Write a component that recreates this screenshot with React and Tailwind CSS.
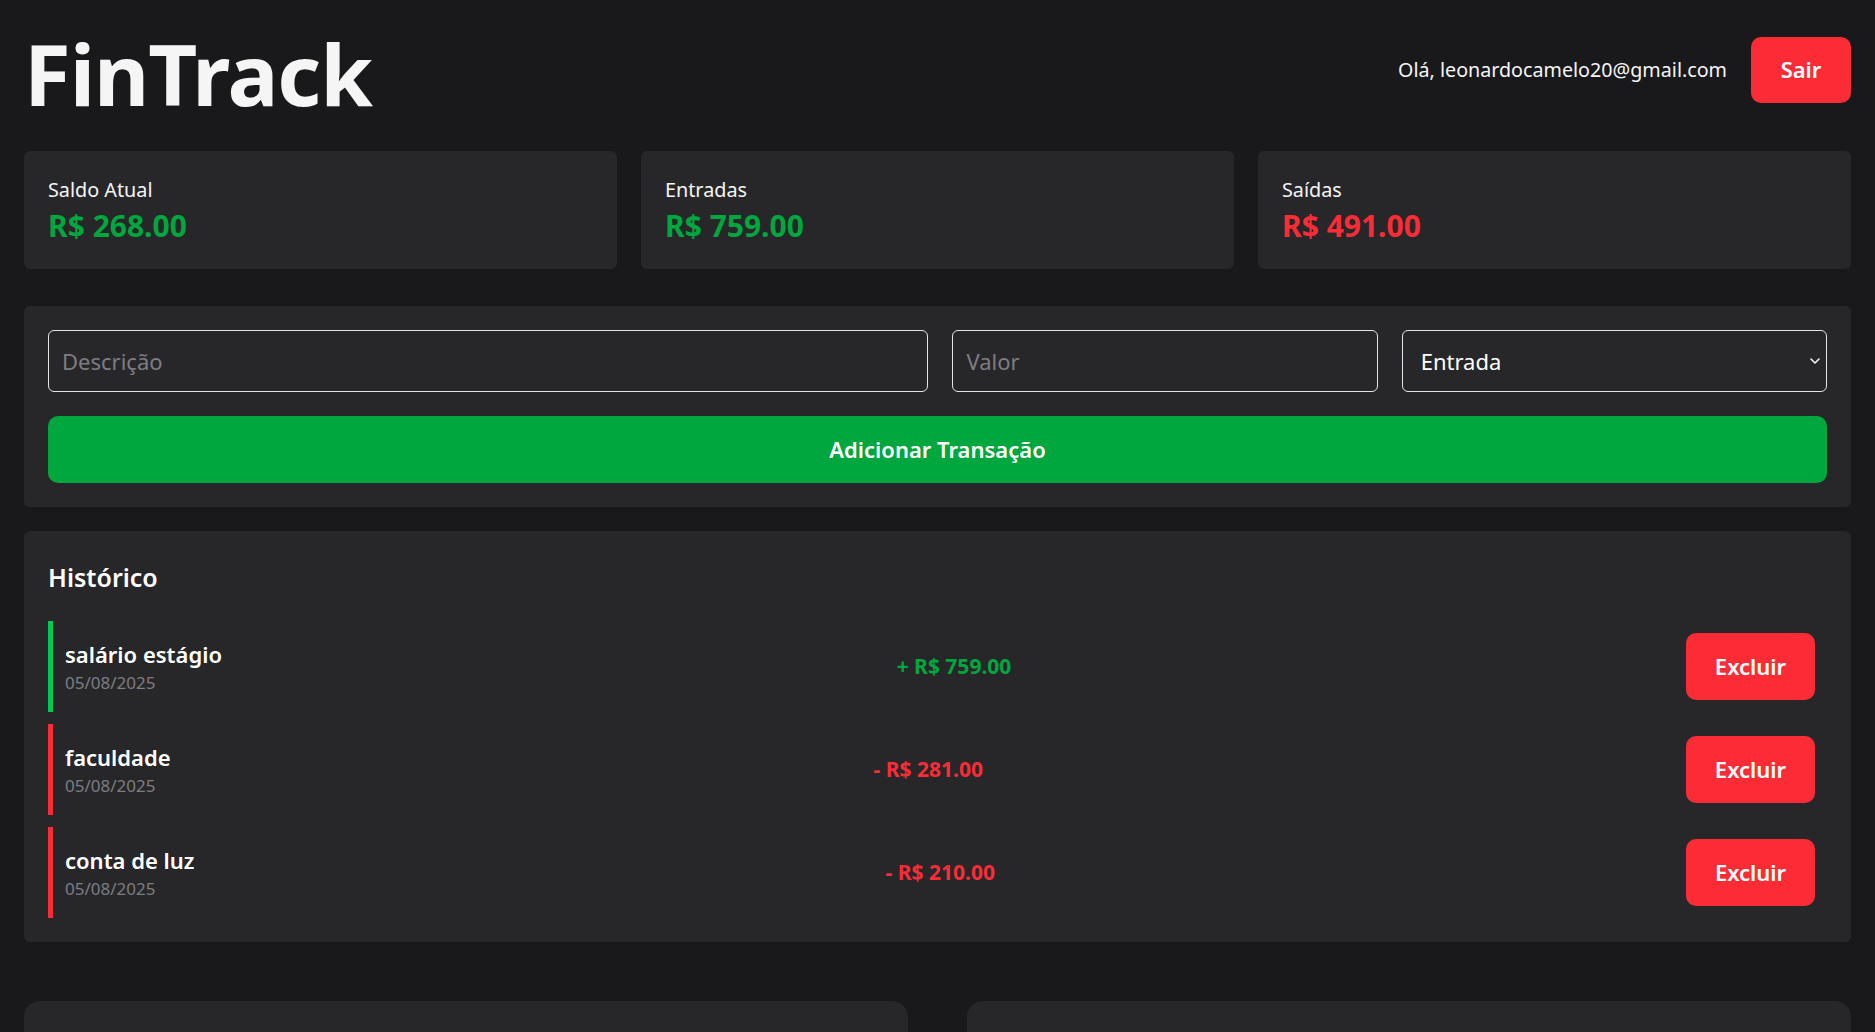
import React from "react";

const items = [
  { title: "salário estágio", date: "05/08/2025", amount: "+ R$ 759.00", type: "in" },
  { title: "faculdade", date: "05/08/2025", amount: "- R$ 281.00", type: "out" },
  { title: "conta de luz", date: "05/08/2025", amount: "- R$ 210.00", type: "out" },
];

export default function App() {
  return (
    <div className="min-h-screen bg-[#19191b] text-white p-6 font-['Noto_Sans',sans-serif]">
      <header className="flex items-center justify-between h-[103px] mb-6">
        <h1 className="text-[85px] font-bold leading-none tracking-[-1px] text-[#f5f5f5] -mt-[4px]">FinTrack</h1>
        <div className="flex items-center gap-6 -mt-[12px]">
          <span className="text-[19.7px] text-[#f5f5f5]">Olá, leonardocamelo20@gmail.com</span>
          <button className="bg-[#fb2c36] text-white font-semibold text-[22px] w-[100px] h-[66px] rounded-[10px]">Sair</button>
        </div>
      </header>

      <div className="grid grid-cols-3 gap-6 mb-[37px]">
        <Card label="Saldo Atual" value="R$ 268.00" color="text-[#00a63e]" />
        <Card label="Entradas" value="R$ 759.00" color="text-[#00a63e]" />
        <Card label="Saídas" value="R$ 491.00" color="text-[#fb2c36]" />
      </div>

      <div className="bg-[#27272a] rounded-md p-6 mb-6">
        <div className="grid grid-cols-[2.07fr_1fr_1fr] gap-6">
          <input
            placeholder="Descrição"
            className="h-[62px] rounded-md border border-[#e4e4e7] bg-transparent px-[13px] text-[22px] placeholder:text-[#7d7d82] outline-none"
          />
          <input
            placeholder="Valor"
            className="h-[62px] rounded-md border border-[#e4e4e7] bg-transparent px-[13px] text-[22px] placeholder:text-[#7d7d82] outline-none"
          />
          <div className="relative h-[62px] rounded-md border border-[#e4e4e7] flex items-center px-[18px] text-[22px]">
            <span>Entrada</span>
            <svg className="absolute right-[4px] top-1/2 -translate-y-1/2" width="14" height="14" viewBox="0 0 14 14" fill="none">
              <path d="M3 5l4 4 4-4" stroke="#f5f5f5" strokeWidth="1.6" strokeLinecap="round" strokeLinejoin="round" />
            </svg>
          </div>
        </div>
        <button className="mt-6 w-full h-[67px] rounded-[10px] bg-[#00a63e] text-white font-semibold text-[22px]">
          Adicionar Transação
        </button>
      </div>

      <div className="bg-[#27272a] rounded-md p-6 mb-[59px]">
        <h2 className="text-[25px] font-semibold mb-[22px] leading-[44px]">Histórico</h2>
        <div className="flex flex-col gap-3">
          {items.map((it, i) => (
            <div
              key={i}
              className={`flex items-center justify-between border-l-[5px] pl-3 pr-3 py-3 ${
                it.type === "in" ? "border-[#00c951]" : "border-[#fb2c36]"
              }`}
            >
              <div className="flex flex-col">
                <span className="text-[22px] font-semibold leading-[30px]">{it.title}</span>
                <span className="text-[17px] text-[#7d7d82] leading-[24px] mt-[2px]">{it.date}</span>
              </div>
              <span className={`text-[21px] font-bold ${it.type === "in" ? "text-[#00a63e]" : "text-[#fb2c36]"}`}>
                {it.amount}
              </span>
              <button className="bg-[#fb2c36] text-white font-semibold text-[22px] w-[129px] h-[67px] rounded-[10px]">
                Excluir
              </button>
            </div>
          ))}
        </div>
      </div>

      <div className="grid grid-cols-2 gap-[59px]">
        <div className="bg-[#27272a] rounded-t-2xl h-[300px]" />
        <div className="bg-[#27272a] rounded-t-2xl h-[300px]" />
      </div>
    </div>
  );
}

function Card({ label, value, color }) {
  return (
    <div className="bg-[#27272a] rounded-md px-6 pt-[26px] h-[118px]">
      <div className="text-[19.8px] leading-[26px] text-[#f5f5f5]">{label}</div>
      <div className={`text-[30px] font-bold leading-[38px] mt-[4px] ${color}`}>{value}</div>
    </div>
  );
}
